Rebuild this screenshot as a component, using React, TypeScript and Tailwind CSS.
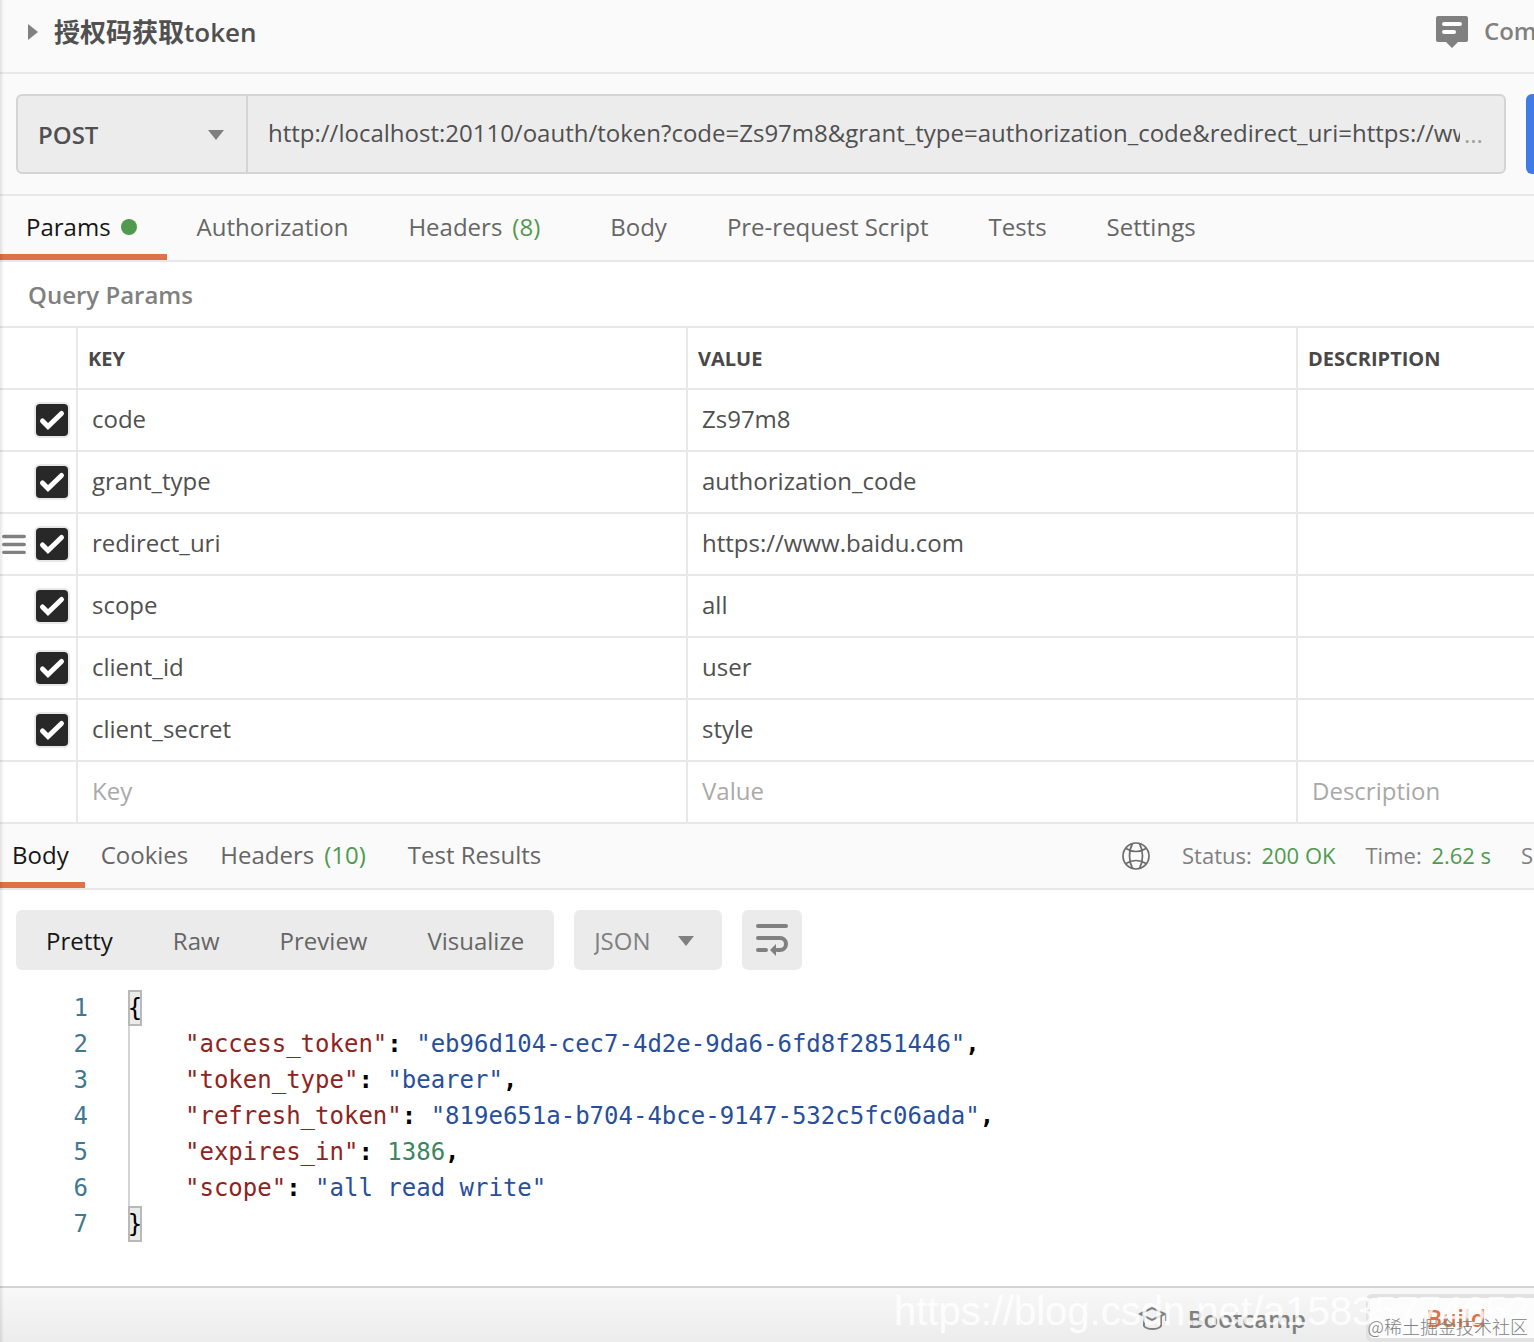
import { useState } from 'react';
import type { ReactNode } from 'react';

const params = [
  { key: 'code', value: 'Zs97m8' },
  { key: 'grant_type', value: 'authorization_code' },
  { key: 'redirect_uri', value: 'https://www.baidu.com', hovered: true },
  { key: 'scope', value: 'all' },
  { key: 'client_id', value: 'user' },
  { key: 'client_secret', value: 'style' },
];

const requestTabs = [
  { label: 'Authorization' },
  { label: 'Headers', count: 8 },
  { label: 'Body' },
  { label: 'Pre-request Script' },
  { label: 'Tests' },
  { label: 'Settings' },
];

const responseLines = [
  { key: 'access_token', value: '"eb96d104-cec7-4d2e-9da6-6fd8f2851446"', comma: true },
  { key: 'token_type', value: '"bearer"', comma: true },
  { key: 'refresh_token', value: '"819e651a-b704-4bce-9147-532c5fc06ada"', comma: true },
  { key: 'expires_in', value: '1386', comma: true, isNumber: true },
  { key: 'scope', value: '"all read write"' },
];

const CaretDown = ({ className }: { className: string }) => (
  <svg className={className} width="16" height="10" viewBox="0 0 16 10" fill="#808080" aria-hidden="true">
    <path d="M0 0h16L8 10z" />
  </svg>
);

const CommentIcon = () => (
  <svg width="32" height="32" viewBox="0 0 32 32" aria-hidden="true">
    <path d="M2 0h28a2 2 0 0 1 2 2v22a2 2 0 0 1-2 2h-8l-6 6-6-6H2a2 2 0 0 1-2-2V2a2 2 0 0 1 2-2z" fill="#808080" />
    <path d="M8 8h16M8 16h10" stroke="#fff" strokeWidth="4" strokeLinecap="round" />
  </svg>
);

const GlobeIcon = () => (
  <svg width="28" height="28" viewBox="0 0 28 28" fill="none" stroke="#6c6c6c" strokeWidth="1.7" aria-hidden="true">
    <circle cx="14" cy="14" r="13" />
    <path d="M10.500 1.500C6.500 9 6.500 19 10.500 26.500M17.500 1.500c4 7.500 4 17.500 0 25M4 6.500c6 4 14 4 20 0M4 21.500c6-4 14-4 20 0" />
  </svg>
);

const WrapIcon = () => (
  <svg width="32" height="32" viewBox="0 0 32 32" fill="none" stroke="#808080" strokeWidth="4" strokeLinecap="round" aria-hidden="true">
    <path d="M2 2h28M2 14h22a6 6 0 0 1 0 12h-3M2 26h8" />
    <path d="M20 20v12l-6-6z" fill="#808080" stroke="none" />
  </svg>
);

const DragHandle = () => (
  <svg width="24" height="20" viewBox="0 0 24 20" stroke="#808080" strokeWidth="3.300" strokeLinecap="round" aria-hidden="true">
    <path d="M1.700 2.500h20.600M1.700 10.500h20.600M1.700 18.300h20.600" />
  </svg>
);

const CapIcon = () => (
  <svg width="30" height="24" viewBox="0 0 30 24" fill="none" stroke="#808080" strokeWidth="2" aria-hidden="true">
    <path d="M2 7l12-6 13 6-13 6zM6 9v10c3 4 14 4 17 0V9M28 7v7" />
  </svg>
);

interface CheckBoxProps {
  label: string;
}

const CheckBox = ({ label }: CheckBoxProps) => {
  const [checked, setChecked] = useState(true);
  return (
    <label className="relative block h-8 w-8">
      <input
        type="checkbox"
        aria-label={label}
        checked={checked}
        onChange={() => setChecked(!checked)}
        className="block h-8 w-8 appearance-none rounded-sm bg-white ring-2 ring-[#e8e8e8] checked:bg-[#282828]"
      />
      {checked && (
        <svg className="pointer-events-none absolute inset-0" width="32" height="32" viewBox="0 0 32 32" fill="none" stroke="#fff" strokeWidth="5" strokeLinecap="round" aria-hidden="true">
          <path d="M6.500 17l5.500 5.500L25.500 9.500" />
        </svg>
      )}
    </label>
  );
};

interface TabProps {
  children: ReactNode;
  active?: boolean;
  className: string;
}

const Tab = ({ children, active, className }: TabProps) => (
  <button
    type="button"
    className={`flex h-16 shrink-0 items-center whitespace-nowrap border-b-6 pt-1 ${active ? 'border-[#dc7247] text-[#161616]' : 'border-transparent text-[#666]'} ${className}`}
  >
    {children}
  </button>
);

const CodeRow = ({ line, children }: { line: number; children: ReactNode }) => (
  <div className="flex h-9 whitespace-pre leading-9">
    <span className="w-22 shrink-0 text-right text-[#3f7891]">{line}</span>
    <div className="ml-10 flex">{children}</div>
  </div>
);

const Brace = ({ children }: { children: string }) => (
  <span className="flex w-[14px] justify-center border-2 border-[#b9b9b9] bg-[#eaecea] leading-8 text-black">{children}</span>
);

const cell = 'h-[62px] border-b-2 border-l-2 border-[#e8e8e8] pb-[2px] pl-[14px]';

const App = () => {
  return (
    <div className="relative flex min-h-screen flex-col overflow-hidden bg-white font-['Open_Sans','Noto_Sans_CJK_SC',sans-serif] text-2xl leading-8 text-[#505050]">
      <div className="pointer-events-none absolute inset-y-0 left-0 z-10 w-1 bg-linear-to-r from-black/10 to-transparent" />

      <header className="flex h-[74px] items-center justify-between border-b-2 border-[#e8e8e8] bg-[#fafafa] pb-2 pl-7">
        <div className="flex items-center gap-4">
          <svg width="10" height="16" viewBox="0 0 10 16" fill="#808080" aria-hidden="true">
            <path d="M0 0l10 8-10 8z" />
          </svg>
          <h1 className="whitespace-nowrap text-[26px] font-semibold">授权码获取token</h1>
        </div>
        <button type="button" className="flex w-[98px] shrink-0 items-center gap-4 overflow-hidden font-semibold text-[#808080]">
          <span className="shrink-0">
            <CommentIcon />
          </span>
          <span className="pb-[2px]">Comments</span>
        </button>
      </header>

      <div className="flex h-[122px] items-center border-b-2 border-[#e8e8e8] bg-[#fafafa] pl-4">
        <div className="flex h-20 min-w-0 flex-1 rounded-md border-2 border-[#d4d4d4] bg-[#ececec]">
          <div className="relative w-[230px] shrink-0 border-r-2 border-[#d4d4d4]">
            <select aria-label="Method" defaultValue="POST" className="h-full w-full appearance-none bg-transparent pl-5 pt-[2px] font-semibold">
              <option>POST</option>
              <option>GET</option>
            </select>
            <CaretDown className="pointer-events-none absolute right-[22px] top-[34px]" />
          </div>
          <input
            aria-label="Request URL"
            className="min-w-0 flex-1 bg-transparent pb-[2px] pl-5"
            defaultValue="http://localhost:20110/oauth/token?code=Zs97m8&grant_type=authorization_code&redirect_uri=https://www.baidu.com&scope=all"
          />
          <span className="flex w-11 items-center pl-1 text-[#a0a0a0]">...</span>
        </div>
        <button type="button" aria-label="Send" className="ml-5 h-20 w-2 rounded-l-md bg-[#3f7ce8]" />
      </div>

      <nav className="flex h-[66px] items-start border-b-2 border-[#e8e8e8] bg-[#fafafa]">
        <Tab active className="pl-[26px] pr-[30px]">
          Params
          <span className="ml-[10px] h-4 w-4 rounded-full bg-[#4f9a4f]" />
        </Tab>
        {requestTabs.map((tab) => (
          <Tab key={tab.label} className={tab.count ? 'pl-[30px] pr-10' : 'px-[30px]'}>
            {tab.label}
            {tab.count && <span className="ml-[10px] text-[#4f9a4f]">({tab.count})</span>}
          </Tab>
        ))}
      </nav>

      <h2 className="flex h-16 items-center pl-7 pt-[2px] font-semibold text-[#808080]">Query Params</h2>

      <table className="w-full table-fixed border-separate border-spacing-0 border-t-2 border-[#e8e8e8] text-left">
        <colgroup>
          <col className="w-[76px]" />
          <col className="w-[610px]" />
          <col className="w-[610px]" />
          <col />
        </colgroup>
        <thead>
          <tr className="text-xl text-[#484848]">
            <th aria-label="Enabled" className="h-[62px] border-b-2 border-[#e8e8e8]" />
            <th className="border-b-2 border-l-2 border-[#e8e8e8] pl-[10px] pt-[2px] font-bold">KEY</th>
            <th className="border-b-2 border-l-2 border-[#e8e8e8] pl-[10px] pt-[2px] font-bold">VALUE</th>
            <th className="border-b-2 border-l-2 border-[#e8e8e8] pl-[10px] pt-[2px] font-bold">DESCRIPTION</th>
          </tr>
        </thead>
        <tbody>
          {params.map((param) => (
            <tr key={param.key}>
              <td className="border-b-2 border-[#e8e8e8]">
                <div className="flex items-center justify-end gap-[10px] pr-2">
                  {param.hovered && <DragHandle />}
                  <CheckBox label={param.key} />
                </div>
              </td>
              <td className={cell}>{param.key}</td>
              <td className={cell}>{param.value}</td>
              <td className={cell} />
            </tr>
          ))}
          <tr>
            <td className="border-b-2 border-[#e8e8e8]" />
            {['Key', 'Value', 'Description'].map((name) => (
              <td key={name} className={cell}>
                <input aria-label={name} placeholder={name} className="w-full bg-transparent placeholder:text-[#a9a9a9]" />
              </td>
            ))}
          </tr>
        </tbody>
      </table>

      <div className="flex h-[66px] justify-between border-b-2 border-[#e8e8e8] bg-[#fafafa]">
        <nav className="flex items-start">
          <Tab active className="pl-3 pr-4">Body</Tab>
          <Tab className="px-4">Cookies</Tab>
          <Tab className="pl-4 pr-5">
            Headers <span className="ml-[10px] text-[#4f9a4f]">(10)</span>
          </Tab>
          <Tab className="px-[22px]">Test Results</Tab>
        </nav>
        <div className="flex w-[412px] shrink-0 items-center overflow-hidden whitespace-nowrap text-[22px] text-[#808080]">
          <span className="mr-8 shrink-0">
            <GlobeIcon />
          </span>
          <span className="mr-[30px] pb-[2px]">
            Status: <span className="ml-1 text-[#4f9a4f]">200 OK</span>
          </span>
          <span className="mr-[30px] pb-[2px]">
            Time: <span className="ml-1 text-[#4f9a4f]">2.62 s</span>
          </span>
          <span className="pb-[2px]">Size:</span>
        </div>
      </div>

      <div className="flex gap-5 px-4 pt-5 text-[#666]">
        <div className="flex h-[60px] items-center gap-[60px] rounded-md bg-[#ebebeb] px-[30px] pt-[2px]">
          <button type="button" className="text-[#161616]">Pretty</button>
          <button type="button">Raw</button>
          <button type="button">Preview</button>
          <button type="button">Visualize</button>
        </div>
        <div className="relative h-[60px] w-[148px]">
          <select aria-label="Format" defaultValue="JSON" className="h-full w-full appearance-none rounded-md bg-[#ebebeb] pl-5 pt-[2px] text-[#808080]">
            <option>JSON</option>
            <option>XML</option>
          </select>
          <CaretDown className="pointer-events-none absolute right-7 top-[26px]" />
        </div>
        <button type="button" aria-label="Wrap lines" className="flex h-[60px] w-[60px] items-center justify-center rounded-md bg-[#ebebeb]">
          <WrapIcon />
        </button>
      </div>

      <div className="flex-1 pt-5 font-['DejaVu_Sans_Mono',monospace] text-2xl text-black">
        <CodeRow line={1}>
          <Brace>{'{'}</Brace>
        </CodeRow>
        {responseLines.map((item, index) => (
          <CodeRow key={item.key} line={index + 2}>
            <span className="border-l-2 border-[#d3d3d3] pl-[55px] text-[#8f2320]">"{item.key}"</span>
            <span className="font-bold">: </span>
            <span className={item.isNumber ? 'text-[#3c8560]' : 'text-[#284f9c]'}>{item.value}</span>
            {item.comma && <span className="font-bold">,</span>}
          </CodeRow>
        ))}
        <CodeRow line={7}>
          <Brace>{'}'}</Brace>
        </CodeRow>
      </div>

      <footer className="relative flex h-14 items-start justify-end overflow-hidden border-t-2 border-[#d3d3d3] bg-linear-to-b from-[#f8f8f8] to-[#ececec]">
        <button type="button" className="mr-[60px] mt-[15px] flex items-center gap-5 font-semibold text-[#808080]">
          <CapIcon />
          Bootcamp
        </button>
        <button type="button" className="mt-[6px] h-12 w-[168px] rounded-l-md border-4 border-r-0 border-[#e2e2e2] bg-[#fcfcfc] pl-2 font-semibold text-[#dc7247]">
          Build
        </button>
        <span className="absolute right-1 top-0 whitespace-nowrap font-['Liberation_Sans',sans-serif] text-[40px] leading-[46px] text-white/80">
          https://blog.csdn.net/a15835774652
        </span>
        <span className="absolute bottom-0 right-[6px] whitespace-nowrap font-['Noto_Sans_CJK_SC',sans-serif] text-lg font-light leading-8 text-[#808080]">
          @稀土掘金技术社区
        </span>
      </footer>
    </div>
  );
};

export default App;
